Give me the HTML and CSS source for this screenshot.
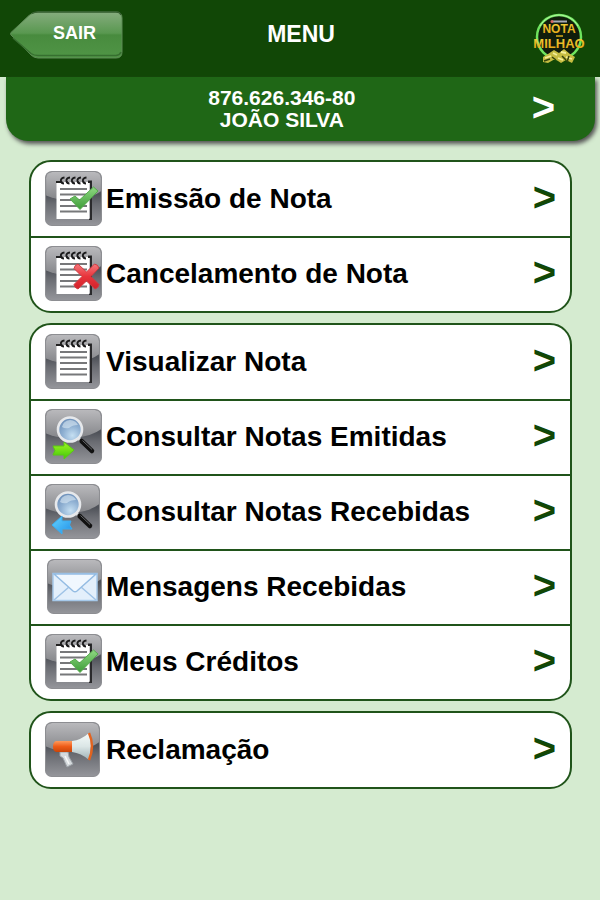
FILE: index.html
```html
<!DOCTYPE html>
<html lang="pt-BR">
<head>
<meta charset="utf-8">
<meta name="viewport" content="width=device-width, initial-scale=1">
<title>Menu</title>
<link rel="stylesheet" href="styles.css">
</head>
<body>
<svg class="defs" aria-hidden="true">
  <defs>
    <linearGradient id="gTile" x1="0" y1="0" x2="0" y2="1"><stop offset="0" stop-color="#77787c"/><stop offset=".42" stop-color="#4e5158"/><stop offset=".6" stop-color="#6a6c72"/><stop offset="1" stop-color="#95969b"/></linearGradient>
    <linearGradient id="gGloss" x1="0" y1="0" x2="0" y2="1"><stop offset="0" stop-color="#b9b9bc"/><stop offset="1" stop-color="#85868a"/></linearGradient>
    <linearGradient id="gBack" x1="0" y1="0" x2="0" y2="1"><stop offset="0" stop-color="#86ac7e"/><stop offset=".46" stop-color="#599850"/><stop offset=".5" stop-color="#488b3e"/><stop offset="1" stop-color="#509546"/></linearGradient>
    <linearGradient id="gCheck" x1="0" y1="0" x2="0" y2="1"><stop offset="0" stop-color="#8fd882"/><stop offset="1" stop-color="#3d9c38"/></linearGradient>
    <linearGradient id="gCross" x1="0" y1="0" x2="0" y2="1"><stop offset="0" stop-color="#f4787c"/><stop offset=".5" stop-color="#e8343b"/><stop offset="1" stop-color="#d2222b"/></linearGradient>
    <radialGradient id="gLens" cx=".6" cy=".75" r=".8"><stop offset="0" stop-color="#c5dff2"/><stop offset=".5" stop-color="#8fb0d2"/><stop offset="1" stop-color="#6689b4"/></radialGradient>
    <linearGradient id="gGo" x1="0" y1="0" x2="0" y2="1"><stop offset="0" stop-color="#a0f820"/><stop offset="1" stop-color="#42c60a"/></linearGradient>
    <linearGradient id="gIn" x1="0" y1="0" x2="1" y2="1"><stop offset="0" stop-color="#66d5ff"/><stop offset="1" stop-color="#2190e8"/></linearGradient>
    <linearGradient id="gOrange" x1="0" y1="0" x2="0" y2="1"><stop offset="0" stop-color="#ff9a5c"/><stop offset=".5" stop-color="#ee5b18"/><stop offset="1" stop-color="#c94509"/></linearGradient>
    <linearGradient id="gHorn" x1="0" y1="0" x2="0" y2="1"><stop offset="0" stop-color="#f5fbfa"/><stop offset=".5" stop-color="#dbe6e6"/><stop offset="1" stop-color="#9eb0b4"/></linearGradient>
    <linearGradient id="gGold" x1="0" y1="0" x2="0" y2="1"><stop offset="0" stop-color="#f5d43a"/><stop offset="1" stop-color="#dda012"/></linearGradient>
    <symbol id="tile" viewBox="0 0 54 54" preserveAspectRatio="none">
      <rect x=".5" y=".5" width="53" height="53" rx="6" fill="url(#gTile)"/>
      <path d="M1 24V7Q1 1 7 1H47Q53 1 53 7V20Q44 27 29 28Q11 29 1 24Z" fill="url(#gGloss)"/>
      <rect x=".5" y=".5" width="53" height="53" rx="6" fill="none" stroke="#8d8e92"/>
    </symbol>
    <symbol id="pad" viewBox="0 0 58 56">
      <path d="M43 10.500H46V48H44" fill="none" stroke="#2a2a2c" stroke-width="2"/>
      <rect x="11.500" y="11" width="33" height="37" fill="#fff"/>
      <path d="M15 18H42M15 23.500H42M15 29H42M15 35H42M15 40.500H42" stroke="#77787a" stroke-width="1.800"/>
      <path d="M11 11H16M43 11H46" stroke="#222" stroke-width="2"/>
      <g fill="none" stroke="#1b1b1c" stroke-width="2"><path id="ring" d="M19.500 6.500Q15.500 7 16 10Q16.500 12.500 19 12.500"/><use href="#ring" x="5.500"/><use href="#ring" x="11"/><use href="#ring" x="16.500"/><use href="#ring" x="22"/></g>
    </symbol>
    <symbol id="check" viewBox="0 0 58 56"><path d="M25 28L30 25L34.500 29L48.500 16L53 20L35 38.500Z" fill="url(#gCheck)" stroke="#55ab4c" stroke-linejoin="round"/></symbol>
    <symbol id="glass" viewBox="0 0 58 56">
      <path d="M33 29L38 34" stroke="#d2d4d6" stroke-width="3"/>
      <path d="M36.500 32L47 42" stroke="#111" stroke-width="4.500" stroke-linecap="round"/>
      <path d="M37.500 31.500L47 40.500" stroke="#66686c"/>
      <circle cx="25" cy="20.500" r="12" fill="url(#gLens)" stroke="#e6e8eb" stroke-width="2.600"/>
      <path d="M17 18Q18 12 25 11Q31 11.500 33 16Q27 16 24 19Q20 20 17 18Z" fill="#e2eef8" opacity=".55"/>
    </symbol>
  </defs>
</svg>

<header class="topbar">
  <button class="back" type="button">
    <svg class="back-shape" viewBox="0 0 113 48" preserveAspectRatio="none" aria-hidden="true">
      <path d="M1 24Q0 23 1 21.500L19 4.500Q23 1 28 1H106Q112 1 112 7V41Q112 47 106 47H28Q24 47 21 44Z" fill="url(#gBack)" stroke="#5c8a54"/>
      <path d="M3 27L21 42.500Q24 44.500 28 44.500H106Q110 44 111 41" fill="none" stroke="#376f30" stroke-width="1.500"/>
      <path d="M22 2.500Q24 1 28 1H106Q110 1 111 4" fill="none" stroke="#365f30" stroke-width="1.500"/>
    </svg>
    <span class="back-label">SAIR</span>
  </button>
  <h1 class="title">MENU</h1>
  <svg class="logo" viewBox="0 0 54 52" role="img" aria-label="Nota Milhão">
    <circle cx="27" cy="24" r="22" fill="#101d0b" stroke="#6ee45e" stroke-width="2.500"/>
    <path d="M8 13A22 22 0 0 1 46 13" fill="none" stroke="#b2f59f"/>
    <path d="M20 8.500H35" stroke="#a7a9b5" stroke-width="2"/><circle cx="20" cy="8.500" r="1.500" fill="#d96562"/>
    <g class="logo-text" fill="url(#gGold)" text-anchor="middle">
      <text x="27" y="20" font-size="12">NOTA</text>
      <text x="27" y="35" font-size="13">MILHAO</text>
    </g>
    <path d="M24 23H31" stroke="#d9ac1c" stroke-width="1.500"/>
    <path d="M16 41L22 37L27 40L32 36L38 41L43 44L40 50L34 47L29 50L23 46L16 50L11 49V44Z" fill="#c6bd42"/>
    <path d="M13 45L19 43M21 40L25 42M29 39L34 40M34 44L40 46M26 45L31 47" stroke="#f4ef99" stroke-width="1.800"/>
    <path d="M12 48L18 46M20 44L24 47M30 43L34 47M37 43L35 49" stroke="#35420d" stroke-width="1.500"/>
  </svg>
</header>

<a class="user" href="#">
  <span class="user-text">876.626.346-80<br>JOÃO SILVA</span>
  <span class="arrow">&gt;</span>
</a>

<main class="menu">
  <nav class="group">
    <a class="row" href="#">
      <svg class="icon" viewBox="0 0 58 56" aria-hidden="true"><use href="#tile" width="57" height="55"/><use href="#pad"/><use href="#check"/></svg>
      <span class="label">Emissão de Nota</span><span class="arrow">&gt;</span>
    </a>
    <a class="row" href="#">
      <svg class="icon" viewBox="0 0 58 56" aria-hidden="true"><use href="#tile" width="57" height="55"/><use href="#pad"/><path d="M33 18L41.500 26L49.500 18Q53 18.500 54 22L46 30.500L54 38.500Q53.500 42 50 43L41.500 35L33 43Q29.500 42 29 38.500L37 30.500L29 22.500Q29.500 19 33 18Z" fill="url(#gCross)" stroke="#cf3c42" stroke-linejoin="round"/></svg>
      <span class="label">Cancelamento de Nota</span><span class="arrow">&gt;</span>
    </a>
  </nav>
  <nav class="group">
    <a class="row" href="#">
      <svg class="icon" viewBox="0 0 58 56" aria-hidden="true"><use href="#tile" width="55" height="55"/><use href="#pad"/></svg>
      <span class="label">Visualizar Nota</span><span class="arrow">&gt;</span>
    </a>
    <a class="row" href="#">
      <svg class="icon" viewBox="0 0 58 56" aria-hidden="true"><use href="#tile" width="57" height="55"/><use href="#glass"/><path d="M8 37H19V33L29 41L19 50V46H8L10 41.500Z" fill="url(#gGo)" stroke="#5bc814"/></svg>
      <span class="label">Consultar Notas Emitidas</span><span class="arrow">&gt;</span>
    </a>
    <a class="row" href="#">
      <svg class="icon" viewBox="0 0 58 56" aria-hidden="true"><use href="#tile" width="55" height="55"/><use href="#glass" x="-2"/><path d="M7 41L17 32V37H26L24.500 41L27 45H17V50Z" fill="url(#gIn)" stroke="#3badf0"/></svg>
      <span class="label">Consultar Notas Recebidas</span><span class="arrow">&gt;</span>
    </a>
    <a class="row" href="#">
      <svg class="icon" viewBox="0 0 58 56" aria-hidden="true"><use href="#tile" x="2" width="55" height="55"/><rect x="8" y="14.500" width="44" height="27" fill="#e3effb" stroke="#a6c9ea" stroke-width="1.500"/><path d="M9 41L24 28M51 41L36 28" stroke="#9fc3e6" stroke-width="1.500"/><path d="M9 15L28 32Q30 33.500 32 32L51 15Z" fill="#f0f7fe" stroke="#94bce3" stroke-width="1.500"/></svg>
      <span class="label">Mensagens Recebidas</span><span class="arrow">&gt;</span>
    </a>
    <a class="row" href="#">
      <svg class="icon" viewBox="0 0 58 56" aria-hidden="true"><use href="#tile" width="57" height="55"/><use href="#pad"/><use href="#check"/></svg>
      <span class="label">Meus Créditos</span><span class="arrow">&gt;</span>
    </a>
  </nav>
  <nav class="group">
    <a class="row" href="#">
      <svg class="icon" viewBox="0 0 58 56" aria-hidden="true"><use href="#tile" width="55" height="55"/>
        <path d="M15 30H23L24 35L28 42L22 45L18 36L15 34Z" fill="#d5dadd" stroke="#9da3a8"/><path d="M20 34L24 42" stroke="#f6f8f8" stroke-width="1.500"/>
        <path d="M11 19H28V30H11Q8 29 8 24.500Q8 20 11 19Z" fill="url(#gOrange)"/>
        <path d="M27 19Q36 18 44 11Q48 24 44 38Q36 31 27 30Z" fill="url(#gHorn)"/>
        <path d="M44 11Q50 24 44 38" fill="none" stroke="#e2631f" stroke-width="2.500"/>
      </svg>
      <span class="label">Reclamação</span><span class="arrow">&gt;</span>
    </a>
  </nav>
</main>
</body>
</html>
```

FILE: styles.css
```css
* { box-sizing: border-box; }

body {
  margin: 0;
  min-height: 100vh;
  background: #d5ebd0;
  color: #000;
  font-family: "Liberation Sans", Arial, sans-serif;
  font-weight: bold;
}

a { color: inherit; text-decoration: none; }

.defs { position: absolute; width: 0; height: 0; }

.topbar {
  display: grid;
  grid-template-columns: 1fr auto 1fr;
  align-items: start;
  height: 77px;
  padding: 11px 8px 0 10px;
  background: #114706;
  color: #fff;
}

.back {
  position: relative;
  width: 113px;
  height: 48px;
  padding: 0 0 4px 16px;
  border: 0;
  background: none;
  color: #fff;
  font: inherit;
  font-size: 18px;
  cursor: pointer;
}

.back-shape {
  position: absolute;
  inset: 0;
  width: 100%;
  height: 100%;
}

.back-label { position: relative; }

.title {
  margin: 0;
  font-size: 23px;
  line-height: 46px;
}

.logo {
  justify-self: end;
  width: 54px;
  height: 52px;
  margin: 2px 6px 0 0;
}

.logo-text { font-family: "Liberation Sans", Arial, sans-serif; }

.user {
  display: flex;
  align-items: center;
  height: 64px;
  margin: 0 5px 0 6px;
  padding: 0 40px 0 26px;
  border-radius: 0 0 22px 22px;
  background: #1f6716;
  box-shadow: 2px 3px 4px #555;
  color: #fff;
}

.user-text {
  flex: 1;
  font-size: 21px;
  line-height: 22px;
  text-align: center;
}

.arrow {
  padding-bottom: 4px;
  font-size: 40px;
  line-height: 50px;
}

.menu {
  display: grid;
  gap: 10px;
  padding: 19px 28px 20px 29px;
}

.group {
  overflow: hidden;
  border: 2px solid #20541a;
  border-radius: 22px;
  background: #fff;
}

.row {
  display: flex;
  align-items: center;
  height: 74px;
  padding: 0 14px;
}

.row + .row {
  height: 75px;
  padding-bottom: 2px;
  border-top: 2px solid #20541a;
}

.row .arrow { color: #114706; }

.icon {
  flex: none;
  width: 58px;
  height: 56px;
  margin-right: 3px;
}

.label {
  flex: 1;
  font-size: 28px;
}
```
